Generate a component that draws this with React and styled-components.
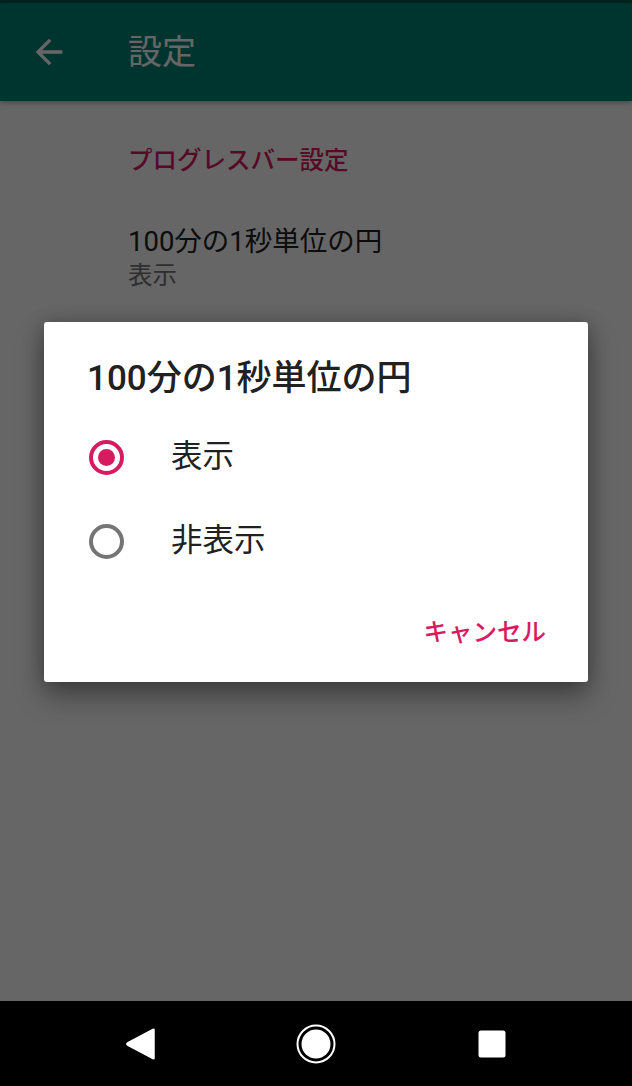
import React from "react";
import styled, { createGlobalStyle } from "styled-components";

const GlobalStyle = createGlobalStyle`
  html, body {
    margin: 0;
    padding: 0;
    background: #000;
  }
  body {
    font-family: Roboto, "Noto Sans CJK JP", sans-serif;
    -webkit-font-smoothing: antialiased;
  }
`;

const Phone = styled.div`
  width: 632px;
  height: 1086px;
  display: flex;
  flex-direction: column;
  overflow: hidden;
`;

const Screen = styled.div`
  position: relative;
  flex: 1;
  display: flex;
  flex-direction: column;
  background: #ffffff;
`;

const StatusBar = styled.div`
  height: 3px;
  background: #00574b;
`;

const AppBar = styled.header`
  height: 98px;
  display: flex;
  align-items: center;
  background: #008577;
  box-shadow: 0 2px 5px rgba(0, 0, 0, 0.3);
  padding-left: 29px;
  position: relative;
  z-index: 1;
`;

const BackButton = styled.svg`
  width: 40px;
  height: 40px;
  fill: #ffffff;
`;

const AppTitle = styled.h1`
  margin: 0 0 0 59px;
  font-size: 34px;
  font-weight: 400;
  color: #ffffff;
  line-height: 40px;
`;

const Prefs = styled.main`
  padding: 44px 0 0 128px;
  display: flex;
  flex-direction: column;
`;

const Category = styled.div`
  font-size: 24.5px;
  line-height: 32px;
  font-weight: 500;
  color: #d81b60;
`;

const PrefItem = styled.div`
  margin-top: 49px;
  display: flex;
  flex-direction: column;
`;

const PrefTitle = styled.div`
  font-size: 27.5px;
  line-height: 32px;
  color: #212121;
`;

const PrefSummary = styled.div`
  margin-top: 2px;
  font-size: 24.5px;
  line-height: 32px;
  color: #757575;
`;

const Scrim = styled.div`
  position: absolute;
  inset: 0;
  z-index: 2;
  background: rgba(0, 0, 0, 0.6);
`;

const Dialog = styled.div`
  position: absolute;
  top: 322px;
  left: 44px;
  width: 544px;
  height: 360px;
  box-sizing: border-box;
  background: #ffffff;
  border-radius: 3px;
  box-shadow: 0 14px 28px rgba(0, 0, 0, 0.35), 0 0 18px rgba(0, 0, 0, 0.22);
  display: flex;
  flex-direction: column;
  padding-top: 37px;
`;

const DialogTitle = styled.h2`
  margin: 0 0 16px;
  padding-left: 43px;
  font-size: 35px;
  line-height: 40px;
  font-weight: 500;
  color: #212121;
`;

const Option = styled.label`
  height: 84px;
  display: flex;
  align-items: center;
  padding-left: 45px;
  gap: 47px;
`;

const Radio = styled.span`
  width: 35px;
  height: 35px;
  box-sizing: border-box;
  border-radius: 50%;
  border: 4px solid ${(p) => (p.$checked ? "#d81b60" : "#757575")};
  display: flex;
  align-items: center;
  justify-content: center;

  &::after {
    content: "";
    width: 17px;
    height: 17px;
    border-radius: 50%;
    background: #d81b60;
    display: ${(p) => (p.$checked ? "block" : "none")};
  }
`;

const OptionLabel = styled.span`
  font-size: 31.5px;
  line-height: 40px;
  color: #212121;
`;

const Actions = styled.div`
  display: flex;
  justify-content: flex-end;
  margin-top: 26px;
  padding-right: 42px;
`;

const TextButton = styled.button`
  border: none;
  background: none;
  padding: 0;
  font-family: inherit;
  font-size: 24.5px;
  line-height: 48px;
  font-weight: 500;
  color: #d81b60;
`;

const NavBar = styled.nav`
  height: 85px;
  background: #000;
  display: flex;
  align-items: center;
  justify-content: center;
  gap: 116px;
`;

const NavSlot = styled.div`
  width: 60px;
  display: flex;
  justify-content: center;
`;

const NavBack = () => (
  <svg width="30" height="34" viewBox="0 0 30 34">
    <path
      d="M28 2.5 Q29 1.8 29 3 L29 31 Q29 32.2 28 31.5 L2.5 18 Q1 17 2.5 16 Z"
      fill="#fff"
      stroke="#fff"
      strokeWidth="1.5"
      strokeLinejoin="round"
    />
  </svg>
);

const NavHome = () => (
  <svg width="40" height="40" viewBox="0 0 40 40">
    <circle cx="20" cy="20" r="18.5" fill="none" stroke="#fff" strokeWidth="2" />
    <circle cx="20" cy="20" r="14.5" fill="#fff" />
  </svg>
);

const NavRecents = () => (
  <svg width="28" height="28" viewBox="0 0 28 28">
    <rect x="0.5" y="0.5" width="27" height="27" rx="2.5" fill="#fff" />
  </svg>
);

export default function App() {
  return (
    <Phone>
      <GlobalStyle />
      <Screen>
        <StatusBar />
        <AppBar>
          <BackButton viewBox="0 0 24 24">
            <path d="M20 11H7.83l5.59-5.59L12 4l-8 8 8 8 1.41-1.41L7.83 13H20v-2z" />
          </BackButton>
          <AppTitle>設定</AppTitle>
        </AppBar>
        <Prefs>
          <Category>プログレスバー設定</Category>
          <PrefItem>
            <PrefTitle>100分の1秒単位の円</PrefTitle>
            <PrefSummary>表示</PrefSummary>
          </PrefItem>
        </Prefs>
        <Scrim>
          <Dialog>
            <DialogTitle>100分の1秒単位の円</DialogTitle>
            <Option>
              <Radio $checked />
              <OptionLabel>表示</OptionLabel>
            </Option>
            <Option>
              <Radio />
              <OptionLabel>非表示</OptionLabel>
            </Option>
            <Actions>
              <TextButton>キャンセル</TextButton>
            </Actions>
          </Dialog>
        </Scrim>
      </Screen>
      <NavBar>
        <NavSlot>
          <NavBack />
        </NavSlot>
        <NavSlot>
          <NavHome />
        </NavSlot>
        <NavSlot>
          <NavRecents />
        </NavSlot>
      </NavBar>
    </Phone>
  );
}
